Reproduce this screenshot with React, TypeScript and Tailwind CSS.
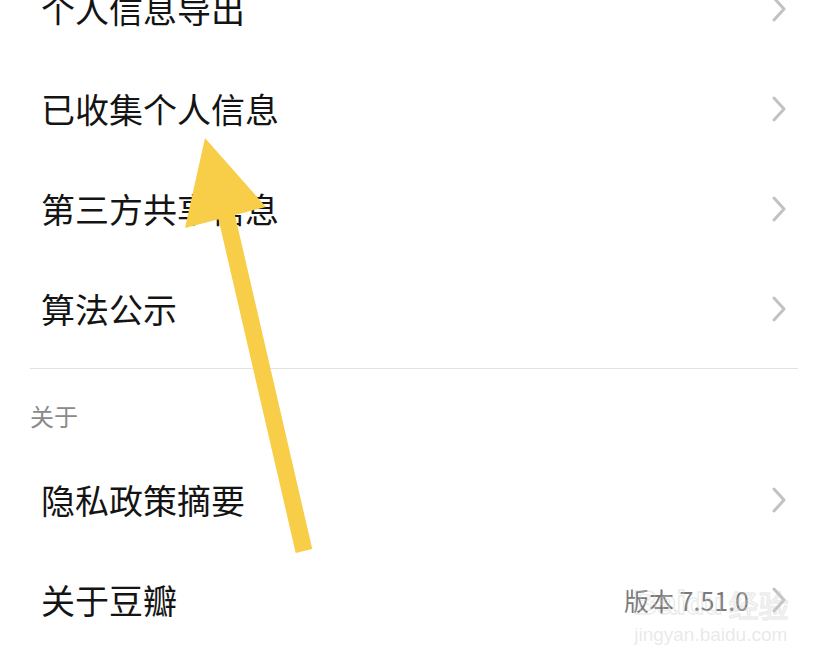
const FONT = '[font-family:"Noto_Sans_CJK_SC","Noto_Sans",sans-serif]';

function Chevron() {
  return (
    <svg width="16" height="26" viewBox="0 0 16 26" className="shrink-0">
      <path d="M3 2 L13 13 L3 24" fill="none" stroke="#c2c2c2" strokeWidth="3" strokeLinecap="round" strokeLinejoin="round" />
    </svg>
  );
}

function Row({ label, extra }: { label: string; extra?: string }) {
  return (
    <div className="h-[100px] flex items-center pl-[41px] pr-[41px]">
      <span className="text-[34px] leading-none text-[#141414] flex-1">{label}</span>
      {extra && <span className="text-[25px] leading-none text-[#7a7a7a] mr-[22px]">{extra}</span>}
      <Chevron />
    </div>
  );
}

export default function App() {
  return (
    <div className={`relative w-[828px] h-[671px] bg-white overflow-hidden ${FONT}`}>
      <div className="-mt-[41px]">
        <Row label="个人信息导出" />
        <Row label="已收集个人信息" />
        <Row label="第三方共享信息" />
        <Row label="算法公示" />
        <div className="mt-[9px] mx-[30px] border-t border-[#e2e2e2]" />
        <div className="h-[81px] pl-[30px] pt-[35px]">
          <span className="block text-[24px] leading-[24px] text-[#8a8a8a]">关于</span>
        </div>
        <Row label="隐私政策摘要" />
        <Row label="关于豆瓣" extra="版本 7.51.0" />
      </div>

      {/* annotation arrow */}
      <svg className="absolute inset-0 pointer-events-none" width="828" height="671" viewBox="0 0 828 671">
        <line x1="226" y1="214" x2="304" y2="551" stroke="#f8cd48" strokeWidth="17" />
        <polygon points="205,138 185,228 266,207" fill="#f8cd48" />
      </svg>

      {/* watermark */}
      <div className="absolute left-[633px] top-[585px] flex flex-col items-center pointer-events-none [font-family:'Liberation_Sans',sans-serif]">
        <div className="flex items-end text-[34px] leading-none font-bold text-transparent [-webkit-text-stroke:1.5px_rgba(205,205,205,0.4)]">
          <span>Bai</span>
          <span className="text-[30px]">du</span>
          <span className={`ml-[6px] text-[30px] font-normal ${FONT}`}>经验</span>
        </div>
        <span className="mt-[6px] text-[19px] leading-none text-[rgba(215,215,215,0.55)]">jingyan.baidu.com</span>
      </div>
    </div>
  );
}
